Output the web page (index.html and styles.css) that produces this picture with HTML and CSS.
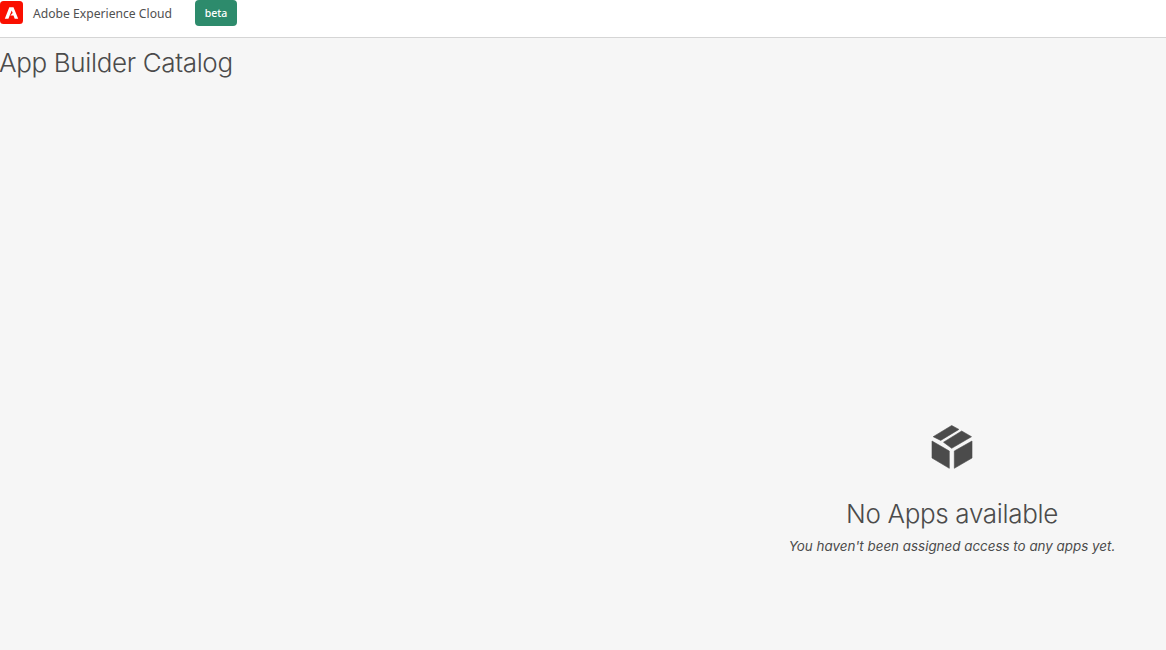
FILE: index.html
```html
<!DOCTYPE html>
<html lang="en">
<head>
<meta charset="utf-8">
<title>App Builder Catalog</title>
<link rel="stylesheet" href="styles.css">
</head>
<body>
<header class="topbar">
  <svg class="logo" viewBox="0 0 23 23" aria-hidden="true">
    <rect width="23" height="23" rx="3.5" fill="#fa0f00"/>
    <path fill="#fff" d="M9.300 6.300h4.200l4.700 11.400h-3.500l-1.200-3.200h-3.200l2.400-2.500-1-2.600-3.300 8.300H4.800z"/>
  </svg>
  <span class="brand">Adobe Experience Cloud</span>
  <span class="badge">beta</span>
</header>
<main class="page">
  <h1 class="title">App Builder Catalog</h1>
  <section class="empty">
    <svg class="empty-icon" viewBox="0 0 42 46" aria-hidden="true">
      <path class="box-part" d="M2.200 11.700 20.700 .5l7.200 3.900L9.700 15.400z"/>
      <path class="box-part" d="M12.500 17.200 30.700 6l9.800 5.700-19.800 11.600z"/>
      <path class="box-part" d="M1 16l17.300 10v17.300L1 33z"/>
      <path class="box-part" d="M41 16 23.300 26v17.300L41 33z"/>
    </svg>
    <h2 class="empty-title">No Apps available</h2>
    <p class="empty-text">You haven't been assigned access to any apps yet.</p>
  </section>
</main>
</body>
</html>
```
FILE: styles.css
```css
* {
  box-sizing: border-box;
}
html, body {
  margin: 0;
  height: 100%;
}
body {
  display: flex;
  flex-direction: column;
  height: 650px;
  overflow: hidden;
  background: #f6f6f6;
  color: #4b4b4b;
  font-family: "Inter", "Liberation Sans", sans-serif;
}
.topbar {
  display: flex;
  align-items: flex-start;
  height: 38px;
  flex: none;
  background: #fff;
  border-bottom: 1px solid #d5d5d5;
}
.logo {
  width: 23px;
  height: 23px;
  margin-top: 1px;
  flex: none;
}
.brand {
  margin-left: 10px;
  margin-top: 5px;
  font-family: "Noto Sans", "Open Sans", sans-serif;
  font-size: 12.150px;
  line-height: 18px;
  color: #505050;
}
.badge {
  margin-left: 23px;
  width: 42px;
  height: 26px;
  background: #2d8b6c;
  border-radius: 4px;
  color: #fff;
  font-family: "Noto Sans", "Open Sans", sans-serif;
  font-size: 10.500px;
  font-weight: 500;
  line-height: 26px;
  text-align: center;
}
.page {
  flex: 1;
  display: flex;
  flex-direction: column;
}
.title {
  margin: 8px 0 0 -1px;
  font-size: 26px;
  line-height: 34px;
  font-weight: 300;
  letter-spacing: -0.35px;
  color: #4b4b4b;
}
.empty {
  display: flex;
  flex-direction: column;
  align-items: center;
  margin-top: 345px;
  margin-left: 738px;
}
.empty-icon {
  width: 42px;
  height: 46px;
}
.box-part {
  fill: #4b4b4b;
  stroke: #4b4b4b;
  stroke-width: 0.6;
  stroke-linejoin: round;
}
.empty-title {
  margin: 26px 0 0;
  font-size: 26px;
  line-height: 34px;
  font-weight: 300;
  letter-spacing: -0.33px;
  color: #4b4b4b;
}
.empty-text {
  margin: 6px 0 0;
  font-size: 13.400px;
  line-height: 18px;
  font-style: italic;
  color: #4b4b4b;
}
```
